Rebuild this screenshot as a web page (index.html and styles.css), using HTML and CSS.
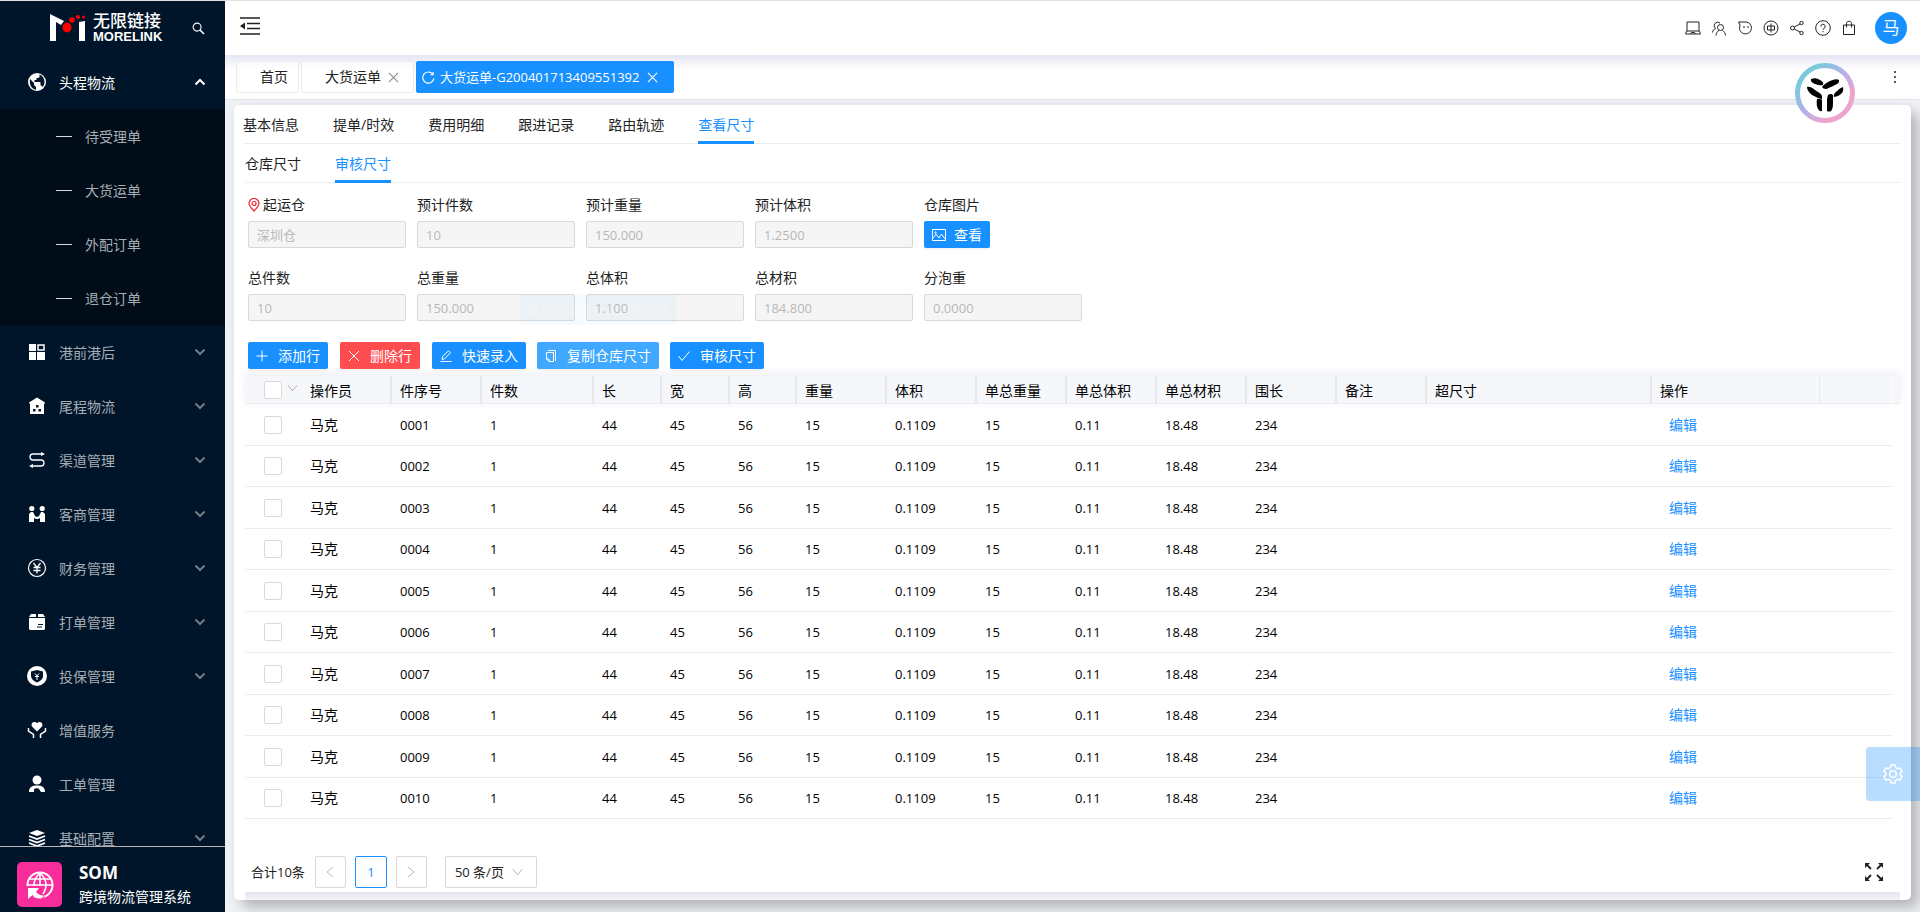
FILE: index.html
```html
<!DOCTYPE html>
<html lang="zh-CN">
<head>
<meta charset="utf-8">
<title>SOM 跨境物流管理系统</title>
<link rel="stylesheet" href="styles.css">
</head>
<body>
<svg class="sprite" aria-hidden="true">
  <symbol id="down" viewBox="0 0 12 8"><path d="M1.500 1.500 6 6l4.500-4.500" fill="none" stroke="currentColor" stroke-width="2"/></symbol>
  <symbol id="thin-down" viewBox="0 0 12 8"><path d="M1 1l5 6 5-6" fill="none" stroke="currentColor" stroke-width="1"/></symbol>
  <symbol id="close" viewBox="0 0 12 12"><path d="M1 1l10 10M11 1L1 11" fill="none" stroke="currentColor" stroke-width="1.200"/></symbol>
</svg>
<div class="app">
  <aside class="sidebar">
    <div class="brand">
      <svg class="brand-mark" viewBox="0 0 36 28"><path d="M0 0l14 7-3 4-5-3v19H0z" fill="#fff"/><path d="M29 8l6-1v20h-6z" fill="#fff"/><ellipse cx="17" cy="13.500" rx="4.500" ry="5" fill="#f00"/><circle cx="22" cy="6" r="2.800" fill="#f00"/><circle cx="28" cy="3" r="2" fill="#f00"/><circle cx="33.500" cy="3" r="1.500" fill="#f00"/></svg>
      <div class="brand-name"><span class="brand-cn">无限链接</span><span class="brand-en">MORELINK</span></div>
      <button class="plain search" aria-label="搜索"><svg viewBox="0 0 14 14"><circle cx="5.500" cy="5.500" r="4.300" fill="none" stroke="currentColor" stroke-width="1.200"/><path d="M8.500 8.500l4.500 4.500" stroke="currentColor" stroke-width="1.600"/></svg></button>
    </div>
    <nav class="menu">
      <a class="item open" href="#"><svg class="ico" viewBox="0 0 20 20"><circle cx="10" cy="10" r="9" fill="#fff"/><path d="M3 7l4 4v2l2 2v2.700C4.500 17 2 13 3 7zM12.500 2.600c3 1 5 4 5 7.400 0 2-1 4-2 5-.4-.8-1-1.500-2-1.500V11c0-.8-.5-1-1-1H7.500V8h2V6h2l1-1z" fill="#001529"/></svg><span>头程物流</span><svg class="chev"><use href="#down"/></svg></a>
      <div class="submenu">
        <a class="subitem" href="#"><i></i><span>待受理单</span></a>
        <a class="subitem" href="#"><i></i><span>大货运单</span></a>
        <a class="subitem" href="#"><i></i><span>外配订单</span></a>
        <a class="subitem" href="#"><i></i><span>退仓订单</span></a>
      </div>
      <a class="item" href="#"><svg class="ico" viewBox="0 0 20 20"><path d="M2 2h7v7H2zM2 10h7v8H2zM10 10h8v8h-8z" fill="#fff"/><path d="M11 3h6v5h-6z" fill="none" stroke="#fff" stroke-width="1.500"/></svg><span>港前港后</span><svg class="chev"><use href="#down"/></svg></a>
      <a class="item" href="#"><svg class="ico" viewBox="0 0 20 20"><path d="M10 1.500L2 6.500v1h1V18h14V7.500h1v-1z" fill="#fff"/><path d="M9 9h2.500v2.500H9zM6 13h2.500v2.500H6zM11.500 13H14v2.500h-2.500z" fill="#001529"/></svg><span>尾程物流</span><svg class="chev"><use href="#down"/></svg></a>
      <a class="item" href="#"><svg class="ico" viewBox="0 0 20 20"><path d="M15 4H6a3 3 0 0 0 0 6h8a3 3 0 0 1 0 6H4" fill="none" stroke="#fff" stroke-width="1.300"/><path d="M14 2L18 4l-4 2zM6 14L2 16l4 2z" fill="#fff"/></svg><span>渠道管理</span><svg class="chev"><use href="#down"/></svg></a>
      <a class="item" href="#"><svg class="ico" viewBox="0 0 20 20"><circle cx="4.800" cy="4.500" r="2.600" fill="#fff"/><circle cx="15.200" cy="4.500" r="2.600" fill="#fff"/><path d="M2 10l2-2h2l2 4 2 1 2-1 2-4h2l2 2v8h-5v-4l-2 1h-2l-2-1v4H2z" fill="#fff"/></svg><span>客商管理</span><svg class="chev"><use href="#down"/></svg></a>
      <a class="item" href="#"><svg class="ico" viewBox="0 0 20 20"><circle cx="10" cy="10" r="8.500" fill="none" stroke="#fff" stroke-width="1.200"/><path d="M6.500 5l3.500 4.500L13.500 5M6.500 9.500h7M6.500 12.500h7M10 9.500V15.500" fill="none" stroke="#fff" stroke-width="1.300"/></svg><span>财务管理</span><svg class="chev"><use href="#down"/></svg></a>
      <a class="item" href="#"><svg class="ico" viewBox="0 0 20 20"><path d="M4 2h5v3H2zM11 2h5l2 3h-7zM2 6h16v11l-1 1H3l-1-1z" fill="#fff"/><path d="M11 12.500h5M10 15h5" stroke="#001529" stroke-width="1.200"/></svg><span>打单管理</span><svg class="chev"><use href="#down"/></svg></a>
      <a class="item" href="#"><svg class="ico" viewBox="0 0 20 20"><circle cx="10" cy="10" r="10" fill="#fff"/><path d="M10 4l6 1.500V10c0 3-2.500 5-6 6.500C6.500 15 4 13 4 10V5.500z" fill="#001529"/><path d="M8 7.500l2 2.500 2-2.500M8 10.500h4M10 10v4" fill="none" stroke="#fff"/></svg><span>投保管理</span><svg class="chev"><use href="#down"/></svg></a>
      <a class="item" href="#"><svg class="ico" viewBox="0 0 20 20"><path d="M10 11.500L5 6.500C3.500 3.500 6.500.5 10 3c3.500-2.500 6.500.5 5 3.500z" fill="#fff"/><path d="M1.500 8v3l5 3.500V18M18.500 8v3l-5 3.500V18" fill="none" stroke="#fff" stroke-width="1.500"/></svg><span>增值服务</span></a>
      <a class="item" href="#"><svg class="ico" viewBox="0 0 20 20"><circle cx="10" cy="6" r="4.500" fill="#fff"/><path d="M2 18c0-5 3-6.500 8-6.500s8 1.500 8 6.500h-4l-2-3-2-1-3 1v3z" fill="#fff"/></svg><span>工单管理</span></a>
      <a class="item" href="#"><svg class="ico" viewBox="0 0 20 20"><path d="M10 2l8 3-8 3-8-3z" fill="#fff"/><path d="M2 8l8 3 8-3M2 11.500l8 3 8-3M2 15l8 3 8-3" fill="none" stroke="#fff" stroke-width="1.800"/></svg><span>基础配置</span><svg class="chev"><use href="#down"/></svg></a>
    </nav>
    <div class="product">
      <span class="product-logo"><svg viewBox="0 0 28 28"><circle cx="14" cy="14" r="12.500" fill="none" stroke="#fff" stroke-width="2"/><path d="M14 2c-8 7-8 17 0 24 8-7 8-17 0-24zM14 2v14M2 14h24M4 8h20" fill="none" stroke="#fff" stroke-width="1.600"/><path d="M0 28V15h15v4l-2 2 6 3-1 3-6-1-4-1-3 3z" fill="#f72d9c"/><path d="M2 17h11l-3 4c3 3 6 4 9 3.500-4 3.500-9 3-12.500-.5L2 28z" fill="#fff"/></svg></span>
      <div><div class="product-code">SOM</div><div class="product-name">跨境物流管理系统</div></div>
    </div>
  </aside>

  <div class="page">
    <header class="topbar">
      <button class="plain fold" aria-label="收起菜单"><svg viewBox="0 0 20 18"><path d="M0 1h20M7 6.500h13M7 11.500h13M0 17h20" stroke="#222" stroke-width="1.600"/><path d="M5 5.500v7L0 9z" fill="#222"/></svg></button>
      <div class="tools">
        <button class="plain" aria-label="工作台"><svg viewBox="0 0 16 16"><path d="M2 2h12v9H2zM1.500 11L.6 14h14.800l-.9-3M5.500 14l1-1.500h3l1 1.500"/></svg></button>
        <button class="plain" aria-label="客服"><svg viewBox="0 0 16 16"><circle cx="9.500" cy="7.500" r="3"/><path d="M5 15.500c.2-2.500 1.500-4 3-5.300M14.500 15.500c-.2-2.500-1.500-4-3-5.300M4.500 8.500A3 3 0 1 1 9 3M1.500 12.500c.3-2 1-3.200 3-4"/></svg></button>
        <button class="plain" aria-label="消息"><svg viewBox="0 0 16 16"><path d="M1.500 2H9.500a6 6 0 1 1-7 6.500L3 5z"/><path d="M7 6v2M11 6v2"/></svg></button>
        <button class="plain" aria-label="语言"><svg viewBox="0 0 16 16"><circle cx="8" cy="8" r="7"/><path d="M4.500 6h7v4h-7zM8 3.500v9"/></svg></button>
        <button class="plain" aria-label="分享"><svg viewBox="0 0 16 16"><circle cx="3.500" cy="8" r="2"/><circle cx="12.500" cy="3" r="1.700"/><circle cx="12.500" cy="13" r="1.700"/><path d="M5.300 7L11 4M5.300 9l5.700 3"/></svg></button>
        <button class="plain" aria-label="帮助"><svg viewBox="0 0 16 16"><circle cx="8" cy="8" r="7.300"/><path d="M5.800 6.500a2.200 2.200 0 1 1 3 2c-.6.3-.8.600-.8 1.300M8 11v1.200"/></svg></button>
        <button class="plain" aria-label="商城"><svg viewBox="0 0 16 16"><path d="M2.500 5h11v9.500h-11zM5.500 7.500V3.500c0-3 5-3 5 0v4"/></svg></button>
        <button class="plain avatar">马</button>
      </div>
    </header>
    <div class="pagetabs">
      <a class="ptab home" href="#">首页</a>
      <a class="ptab" href="#">大货运单<svg class="x"><use href="#close"/></svg></a>
      <a class="ptab active" href="#"><svg class="reload" viewBox="0 0 14 14"><path d="M11.500 3.200A6 6 0 1 0 12.800 8M12 1v3H9" fill="none" stroke="currentColor" stroke-width="1.200"/></svg>大货运单-G200401713409551392<svg class="x"><use href="#close"/></svg></a>
      <button class="plain more" aria-label="更多"><svg viewBox="0 0 4 14"><circle cx="2" cy="2" r="1"/><circle cx="2" cy="7" r="1"/><circle cx="2" cy="12" r="1"/></svg></button>
    </div>
    <main class="content">
      <section class="card">
        <nav class="tabs outer">
          <a href="#">基本信息</a><a href="#">提单/时效</a><a href="#">费用明细</a><a href="#">跟进记录</a><a href="#">路由轨迹</a><a href="#" class="on">查看尺寸</a>
        </nav>
        <nav class="tabs inner"><a href="#">仓库尺寸</a><a href="#" class="on">审核尺寸</a></nav>
        <div class="form">
          <div class="field"><label for="f1"><svg class="pin" viewBox="0 0 12 14"><path d="M6 13C3 10 1 8 1 5.500a5 5 0 0 1 10 0C11 8 9 10 6 13z"/><circle cx="6" cy="5.500" r="2"/></svg>起运仓</label><input id="f1" value="深圳仓" disabled></div>
          <div class="field"><label for="f2">预计件数</label><input id="f2" value="10" disabled></div>
          <div class="field"><label for="f3">预计重量</label><input id="f3" value="150.000" disabled></div>
          <div class="field"><label for="f4">预计体积</label><input id="f4" value="1.2500" disabled></div>
          <div class="field"><label for="f5">仓库图片</label><button id="f5" class="btn view"><svg viewBox="0 0 14 12"><path d="M.5.5h13v11H.5zM1 9l3-4 3 4 2.500-4L13 10"/><circle cx="3.500" cy="3.500" r=".7"/></svg>查看</button></div>
          <div class="field"><label for="f6">总件数</label><input id="f6" value="10" disabled></div>
          <div class="field"><label for="f7">总重量</label><input id="f7" value="150.000" disabled></div>
          <div class="field"><label for="f8">总体积</label><input id="f8" value="1.100" disabled></div>
          <div class="field"><label for="f9">总材积</label><input id="f9" value="184.800" disabled></div>
          <div class="field"><label for="f10">分泡重</label><input id="f10" value="0.0000" disabled></div>
        </div>
        <div class="actions">
          <button class="btn"><svg viewBox="0 0 12 12"><path d="M6 .5v11M.5 6h11"/></svg>添加行</button>
          <button class="btn danger"><svg viewBox="0 0 12 12"><path d="M1 1l10 10M11 1L1 11"/></svg>删除行</button>
          <button class="btn"><svg viewBox="0 0 12 12"><path d="M.5 11.500h11M2 9.500l.5-3L8.500.800l2 2-6 6z"/></svg>快速录入</button>
          <div class="tipwrap"><button class="btn hover"><svg viewBox="0 0 12 12"><path d="M3 .5h7.500V11M1.500 2.500h7v9H4L1.500 9zM1.500 9H4v2.500"/></svg>复制仓库尺寸</button><span class="tip">复制仓库尺寸到审核尺寸</span></div>
          <button class="btn"><svg viewBox="0 0 12 12"><path d="M.5 6l3.500 4.500L11.500 1.500"/></svg>审核尺寸</button>
        </div>
        <div class="grid">
          <table>
            <colgroup><col class="w55"><col class="w90"><col class="w90"><col class="w112"><col class="w68"><col class="w68"><col class="w67"><col class="w90"><col class="w90"><col class="w90"><col class="w90"><col class="w90"><col class="w90"><col class="w90"><col class="w225"><col class="w169"><col><col class="w8"></colgroup>
            <thead><tr><th><span class="pick"><input type="checkbox" aria-label="全选"><svg class="drop"><use href="#thin-down"/></svg></span></th><th>操作员</th><th>件序号</th><th>件数</th><th>长</th><th>宽</th><th>高</th><th>重量</th><th>体积</th><th>单总重量</th><th>单总体积</th><th>单总材积</th><th>围长</th><th>备注</th><th>超尺寸</th><th>操作</th><th></th><th></th></tr></thead>
            <tbody>
              <tr><td><input type="checkbox" aria-label="选择 0001"></td><td class="cn">马克</td><td>0001</td><td>1</td><td>44</td><td>45</td><td>56</td><td>15</td><td>0.1109</td><td>15</td><td>0.11</td><td>18.48</td><td>234</td><td></td><td></td><td class="op"><a href="#">编辑</a></td><td></td><td></td></tr>
              <tr><td><input type="checkbox" aria-label="选择 0002"></td><td class="cn">马克</td><td>0002</td><td>1</td><td>44</td><td>45</td><td>56</td><td>15</td><td>0.1109</td><td>15</td><td>0.11</td><td>18.48</td><td>234</td><td></td><td></td><td class="op"><a href="#">编辑</a></td><td></td><td></td></tr>
              <tr><td><input type="checkbox" aria-label="选择 0003"></td><td class="cn">马克</td><td>0003</td><td>1</td><td>44</td><td>45</td><td>56</td><td>15</td><td>0.1109</td><td>15</td><td>0.11</td><td>18.48</td><td>234</td><td></td><td></td><td class="op"><a href="#">编辑</a></td><td></td><td></td></tr>
              <tr><td><input type="checkbox" aria-label="选择 0004"></td><td class="cn">马克</td><td>0004</td><td>1</td><td>44</td><td>45</td><td>56</td><td>15</td><td>0.1109</td><td>15</td><td>0.11</td><td>18.48</td><td>234</td><td></td><td></td><td class="op"><a href="#">编辑</a></td><td></td><td></td></tr>
              <tr><td><input type="checkbox" aria-label="选择 0005"></td><td class="cn">马克</td><td>0005</td><td>1</td><td>44</td><td>45</td><td>56</td><td>15</td><td>0.1109</td><td>15</td><td>0.11</td><td>18.48</td><td>234</td><td></td><td></td><td class="op"><a href="#">编辑</a></td><td></td><td></td></tr>
              <tr><td><input type="checkbox" aria-label="选择 0006"></td><td class="cn">马克</td><td>0006</td><td>1</td><td>44</td><td>45</td><td>56</td><td>15</td><td>0.1109</td><td>15</td><td>0.11</td><td>18.48</td><td>234</td><td></td><td></td><td class="op"><a href="#">编辑</a></td><td></td><td></td></tr>
              <tr><td><input type="checkbox" aria-label="选择 0007"></td><td class="cn">马克</td><td>0007</td><td>1</td><td>44</td><td>45</td><td>56</td><td>15</td><td>0.1109</td><td>15</td><td>0.11</td><td>18.48</td><td>234</td><td></td><td></td><td class="op"><a href="#">编辑</a></td><td></td><td></td></tr>
              <tr><td><input type="checkbox" aria-label="选择 0008"></td><td class="cn">马克</td><td>0008</td><td>1</td><td>44</td><td>45</td><td>56</td><td>15</td><td>0.1109</td><td>15</td><td>0.11</td><td>18.48</td><td>234</td><td></td><td></td><td class="op"><a href="#">编辑</a></td><td></td><td></td></tr>
              <tr><td><input type="checkbox" aria-label="选择 0009"></td><td class="cn">马克</td><td>0009</td><td>1</td><td>44</td><td>45</td><td>56</td><td>15</td><td>0.1109</td><td>15</td><td>0.11</td><td>18.48</td><td>234</td><td></td><td></td><td class="op"><a href="#">编辑</a></td><td></td><td></td></tr>
              <tr><td><input type="checkbox" aria-label="选择 0010"></td><td class="cn">马克</td><td>0010</td><td>1</td><td>44</td><td>45</td><td>56</td><td>15</td><td>0.1109</td><td>15</td><td>0.11</td><td>18.48</td><td>234</td><td></td><td></td><td class="op"><a href="#">编辑</a></td><td></td><td></td></tr>
            </tbody>
          </table>
        </div>
        <div class="pager">
          <span class="total">合计10条</span>
          <button class="pg" aria-label="上一页"><svg viewBox="0 0 8 12"><path d="M7 1L1 6l6 5"/></svg></button>
          <button class="pg cur">1</button>
          <button class="pg" aria-label="下一页"><svg viewBox="0 0 8 12"><path d="M1 1l6 5-6 5"/></svg></button>
          <span class="size"><select aria-label="每页条数"><option>50 条/页</option></select><svg class="drop"><use href="#thin-down"/></svg></span>
          <button class="plain expand" aria-label="全屏"><svg viewBox="0 0 18 18"><path d="M2 2l4 4M16 2l-4 4M2 16l4-4M16 16l-4-4" stroke="#222" stroke-width="1.800"/><path d="M0 0h5L0 5zM18 0h-5l5 5zM0 18h5l-5-5zM18 18h-5l5-5z" fill="#222"/></svg></button>
        </div>
        <div class="strip"></div>
      </section>
    </main>
  </div>
</div>
<button class="plain assistant" aria-label="助手"><svg viewBox="0 0 60 60"><defs><linearGradient id="ring" x1="0" y1="0" x2="1" y2="1"><stop offset=".2" stop-color="#7cc8dc"/><stop offset=".5" stop-color="#b9b0ea"/><stop offset=".75" stop-color="#eda3cc"/></linearGradient></defs><circle cx="30" cy="30" r="27.500" fill="#fff" stroke="url(#ring)" stroke-width="5"/><g fill="#000"><path d="M16 16q5-2 9 1 4 2 3 5-3 1-8-1-5-2-4-5zM27 24q2-3 8-6 6-3 9-1 1 3-4 5-6 3-9 4-3 0-4-2zM12 24q3-1 8 3 7 4 7 6v3q-5-1-10-4-5-4-5-8zM48 24q1 4-2 7-3 3-7 3-1-3 3-6 3-3 6-4zM22 36q4-1 5 1v11q-2 1-4-2-2-4-1-10zM33 32q3-2 5 0v8q0 6-2 8-2 1-4 0V36z"/></g></svg></button>
<button class="plain setting" aria-label="设置"><svg viewBox="0 0 20 20"><path d="M8 1h4l.6 2.600 1.900 1.100L17 4l2 3.400-1.800 1.800v1.600L19 12.600 17 16l-2.500-.7-1.900 1.100L12 19H8l-.6-2.600-1.900-1.100L3 16l-2-3.400 1.800-1.800V9.200L1 7.400 3 4l2.500.7 1.900-1.100z" fill="none" stroke="#fff" stroke-width="1.500"/><circle cx="10" cy="10" r="3.300" fill="none" stroke="#fff" stroke-width="1.500"/></svg></button>
</body>
</html>
```
FILE: styles.css
```css
* { box-sizing: border-box; }
body {
  margin: 0;
  font-family: "Open Sans", "Noto Sans CJK SC", sans-serif;
  font-size: 14px;
  line-height: 22px;
  color: #222;
  background: #f0f2f5;
}
a { color: inherit; text-decoration: none; }
svg { display: block; flex: none; }
button, input, select { font: inherit; }
.sprite { display: none; }
.plain { border: 0; padding: 0; background: none; color: inherit; cursor: pointer; }
.app { display: flex; height: 100vh; border-top: 1px solid #dfdfdf; overflow: hidden; }

/* sidebar */
.sidebar { width: 225px; flex: none; display: flex; flex-direction: column; background: #001529; color: #fff; }
.brand { height: 54px; flex: none; display: flex; align-items: center; padding: 0 20px 0 50px; }
.brand-mark { width: 36px; height: 28px; }
.brand-name { display: flex; flex-direction: column; margin-left: 7px; font-weight: 700; }
.brand-cn { font-size: 17px; line-height: 18px; font-weight: 500; }
.brand-en { font-family: "Liberation Sans", sans-serif; font-size: 13px; line-height: 14px; }
.search { margin-left: auto; }
.search svg { width: 13px; height: 13px; }
.menu { flex: 1; min-height: 0; overflow: hidden; }
.item { height: 54px; display: flex; align-items: center; padding: 0 19px 0 27px; color: #a6adb4; }
.item span, .subitem span { padding-top: 2px; }
.item.open { color: #fff; }
.ico { width: 20px; height: 20px; margin-right: 12px; }
.chev { width: 12px; height: 8px; margin-left: auto; color: #737d87; }
.open .chev { color: #fff; transform: rotate(180deg); }
.submenu { background: #000c17; }
.subitem { height: 54px; display: flex; align-items: center; gap: 13px; padding-left: 56px; color: #a6adb4; }
.subitem i { width: 16px; height: 1px; background: #d5d8da; }
.product { height: 66px; flex: none; display: flex; align-items: center; gap: 17px; padding: 10px 17px 0; border-top: 1px solid #b5b5b5; }
.product-logo { width: 45px; height: 45px; border-radius: 5px; background: #f72d9c; display: flex; align-items: center; justify-content: center; }
.product-logo svg { width: 28px; height: 28px; }
.product-code { font-size: 17px; font-weight: 700; line-height: 24px; }
.product-name { line-height: 24px; }

/* header */
.page { flex: 1; min-width: 0; display: flex; flex-direction: column; }
.topbar { height: 54px; flex: none; display: flex; align-items: center; justify-content: space-between; padding: 0 13px 0 15px; background: #fff; }
.fold { margin-bottom: 4px; }
.fold svg { width: 20px; height: 18px; }
.tools { display: flex; align-items: center; gap: 10px; }
.tools svg { width: 16px; height: 16px; fill: none; stroke: #222; stroke-width: 1; }
.avatar { width: 32px; height: 32px; margin-left: 8px; border-radius: 50%; background: #1890ff; color: #fff; font-size: 17px; }
.pagetabs { height: 45px; flex: none; display: flex; align-items: center; gap: 2px; padding: 0 23px 0 11px; border-bottom: 1px solid #e3e4e8; background: linear-gradient(#e6e6f4, #fff 15px); }
.ptab { height: 32px; display: flex; align-items: center; padding-left: 23px; border: 1px solid #eaebee; border-radius: 2px; background: rgba(255, 255, 255, .6); }
.ptab.home { padding-right: 10px; }
.x { width: 11px; height: 11px; margin: 0 14px 0 7px; color: #8c8c8c; }
.ptab.active { padding-left: 5px; font-size: 13px; color: #fff; background: #1890ff; border-color: #1890ff; }
.active .x { margin: 0 15px 0 8px; color: #fff; }
.reload { width: 13px; height: 13px; margin-right: 5px; }
.more { margin-left: auto; }
.more svg { width: 4px; height: 14px; fill: #222; }

/* card */
.content { flex: 1; min-height: 0; display: flex; padding: 5px 9px 12px; }
.card { flex: 1; min-width: 0; display: flex; flex-direction: column; border-radius: 5px; background: #fff; box-shadow: 8px 8px 14px rgba(0, 0, 0, .24), 0 0 10px rgba(120, 120, 180, .08); }
.tabs { display: flex; gap: 34px; height: 39px; flex: none; border-bottom: 1px solid #eeeeee; }
.tabs a { height: 39px; line-height: 40px; border-bottom: 3px solid transparent; }
.tabs a.on { color: #1890ff; border-color: #1890ff; }
.outer { margin: 0 11px 0 9px; }
.inner { margin: 0 11px; }
.form { display: grid; grid-template-columns: repeat(5, minmax(0, 158px)); gap: 19px 11px; padding: 11px 14px 0; }
.field { display: flex; flex-direction: column; align-items: flex-start; gap: 5px; }
.field label { display: flex; align-items: center; gap: 3px; }
.pin { width: 12px; height: 14px; fill: none; stroke: #f5222d; stroke-width: 1.2; }
.field input { width: 100%; height: 27px; padding: 0 8px; border: 1px solid #d9d9d9; border-radius: 2px; background: #f5f5f5; color: #b8b8b8; font-size: 13px; }
.btn { height: 27px; display: flex; align-items: center; gap: 10px; padding: 0 8px; border: 0; border-radius: 2px; background: #1890ff; color: #fff; white-space: nowrap; box-shadow: 0 2px 0 rgba(0, 0, 0, .04); cursor: pointer; }
.btn svg { width: 12px; height: 12px; fill: none; stroke: #fff; stroke-width: 1; }
.btn.view { gap: 8px; }
.btn.view svg { width: 14px; }
.btn.danger { background: #ff4d4f; }
.btn.hover { background: #40a9ff; }
.actions { display: flex; gap: 11px; padding: 21px 14px 0; }
.actions .danger { margin: 0 1px; }
.tipwrap { position: relative; }
.tip { position: absolute; left: 50%; bottom: 44px; transform: translateX(-50%); padding: 4px 7px; font-size: 13px; white-space: nowrap; color: rgba(255, 255, 255, .3); background: rgba(24, 144, 255, .04); border-radius: 2px; }

/* table */
.grid { flex: 1; min-height: 0; margin: 7px 11px 0; }
table { width: 100%; table-layout: fixed; border-collapse: separate; border-spacing: 0; font-size: 13px; color: #000; }
thead { box-shadow: 0 -3px 8px rgba(200, 203, 225, .3); }
th { height: 28px; padding: 2px 0 0 10px; text-align: left; font-weight: 400; font-size: 14px; background: #f5f7fb; border-bottom: 1px solid #ebecef; white-space: nowrap; }
th + th + th { border-left: 2px solid #e6e8ec; }
th:nth-child(17) { border-left: 1px solid #e9ebef; }
th:last-child { border-left: 1px solid #fff; }
td { height: 41px; padding: 0 0 0 10px; border-bottom: 1px solid #ececec; }
tbody tr:nth-child(odd) td { height: 42px; }
tbody td:last-child { border: 0; }
th:first-child, td:first-child { padding: 0 0 0 19px; }
th:nth-child(n+3) { padding-left: 8px; }
th:last-child, td:last-child { padding: 0; }
td.cn, td.op { font-size: 14px; }
tbody td.op { padding-left: 19px; color: #1890ff; }
.pick { display: flex; align-items: center; gap: 5px; }
input[type="checkbox"] { appearance: none; display: block; flex: none; width: 18px; height: 18px; margin: 0; border: 1px solid #d9d9d9; border-radius: 2px; background: #fff; }
.drop { width: 11px; height: 8px; color: #aaa; }
.pick .drop { margin-bottom: 4px; }
.w8 { width: 8px; }
.w55 { width: 55px; }
.w67 { width: 67px; }
.w68 { width: 68px; }
.w90 { width: 90px; }
.w112 { width: 112px; }
.w169 { width: 169px; }
.w225 { width: 225px; }

/* pagination */
.pager { display: flex; align-items: center; gap: 9px; flex: none; padding: 0 28px 4px 17px; font-size: 13px; }
.total { margin-right: 1px; }
.pg { width: 31px; height: 32px; display: flex; align-items: center; justify-content: center; padding: 0; border: 1px solid #d9d9d9; border-radius: 2px; background: #fff; color: #bbb; }
.pg svg { width: 8px; height: 12px; fill: none; stroke: currentColor; stroke-width: 1; }
.pg.cur { width: 32px; color: #1890ff; border-color: #1890ff; }
.size { display: flex; align-items: center; width: 92px; height: 32px; margin-left: 9px; padding: 0 13px 0 9px; border: 1px solid #d9d9d9; border-radius: 2px; }
.size select { flex: 1; min-width: 0; padding: 0; border: 0; background: none; appearance: none; color: #222; }
.expand { margin-left: auto; }
.expand svg { width: 18px; height: 18px; }
.strip { height: 8px; flex: none; margin: 0 11px; background: linear-gradient(#e5e5f1, #f4f4fa); }

/* floating widgets */
.assistant { position: fixed; top: 63px; right: 65px; width: 60px; height: 60px; }
.setting { position: fixed; right: 0; bottom: 111px; width: 54px; height: 54px; display: flex; align-items: center; justify-content: center; border-radius: 4px 0 0 4px; background: rgba(24, 144, 255, .3); }
.setting svg { width: 20px; height: 20px; }
```
